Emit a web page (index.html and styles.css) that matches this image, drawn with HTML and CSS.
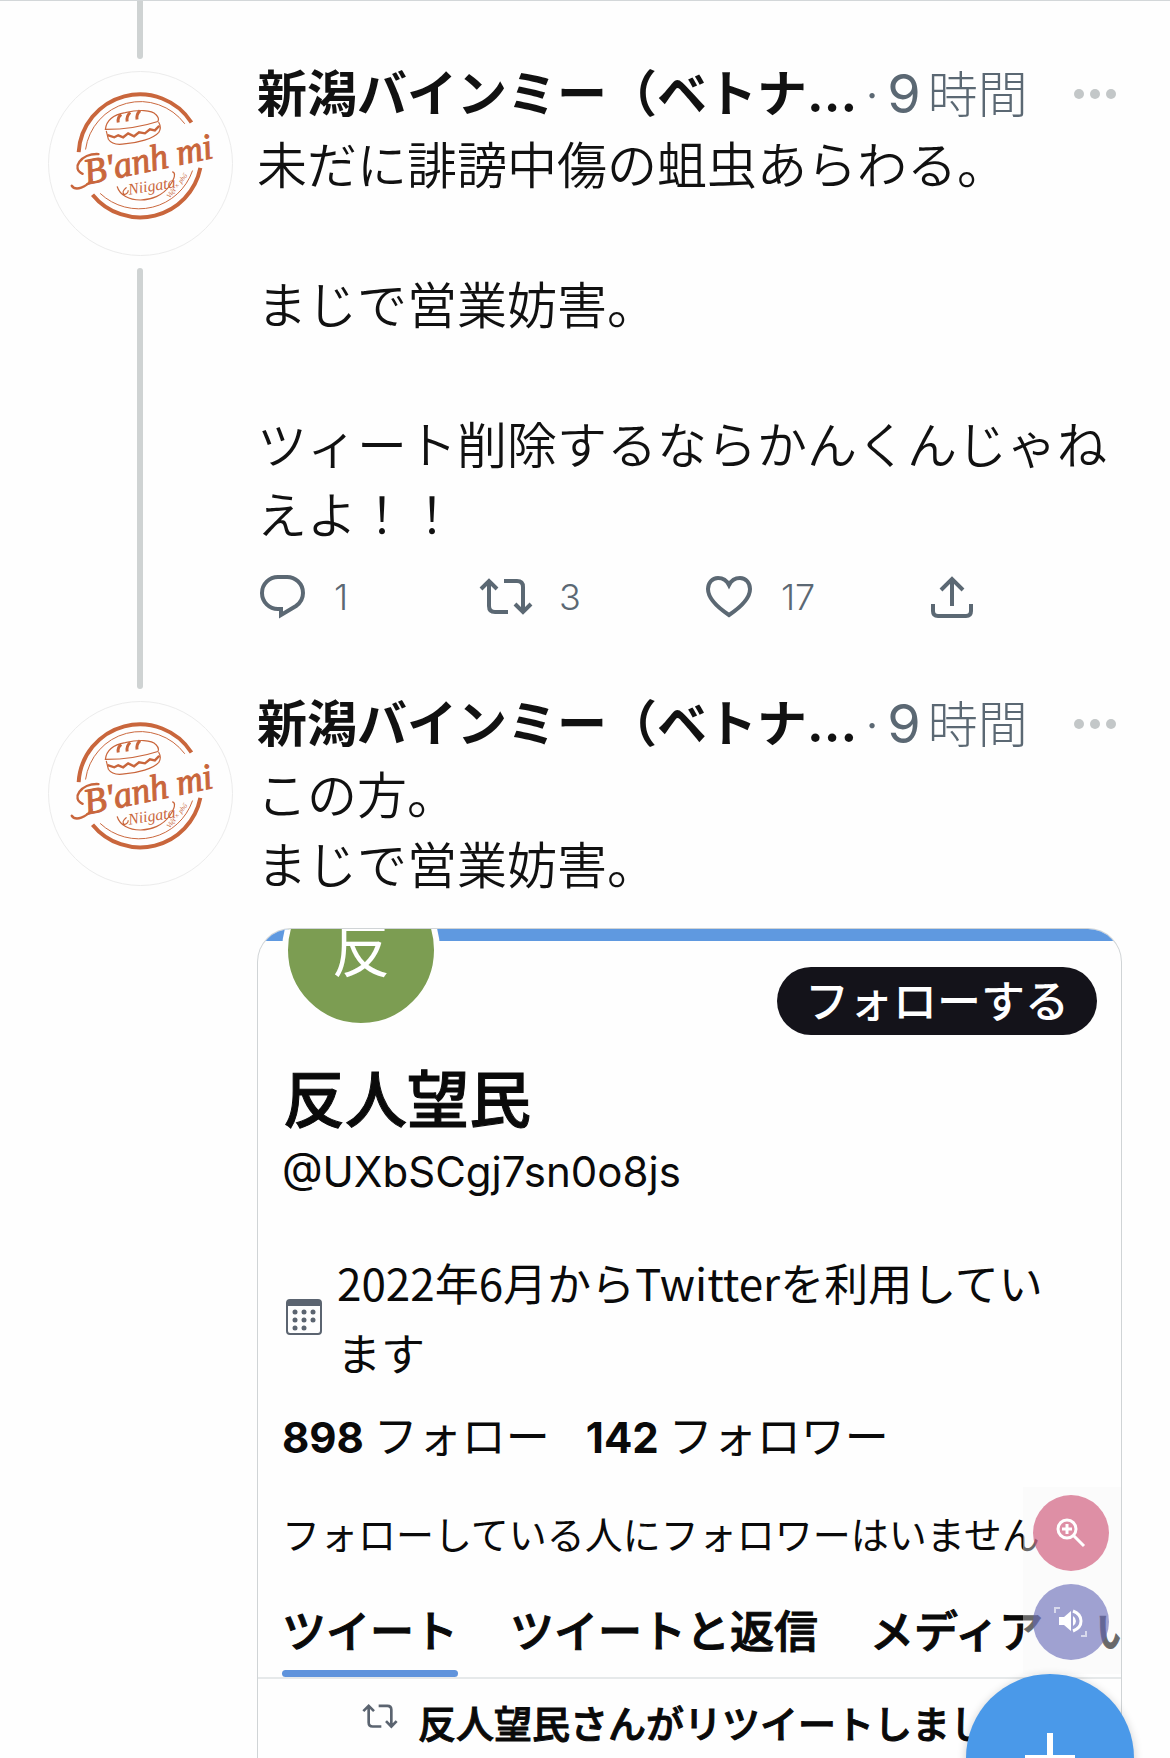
FILE: index.html
```html
<!DOCTYPE html>
<html lang="ja">
<head>
    <meta charset="UTF-8">
    <meta name="viewport" content="width=device-width, initial-scale=1.0">
    <title>新潟バインミー</title>
    <link rel="stylesheet" href="styles.css">
</head>
<body>
    <!-- shared icons -->
    <svg class="sprite" aria-hidden="true">
        <symbol id="logo" viewBox="0 0 185 185">
            <g fill="none" stroke="#c9663c" stroke-linecap="round">
                <path stroke-width="4" stroke-linecap="butt" d="M30 81A62 62 0 0 1 144 51M44 124A62 62 0 0 0 153 97"/>
                <path stroke-width="1" d="M37 78A56 56 0 0 1 137 52M52 123A57 57 0 0 0 145 100"/>
                <path stroke-width="1.2" d="M57 58C58 48 66 43 77 41C90 38 104 38 108 43Q112 47 110 50C95 55 76 58 57 58ZM58 60L60 68Q64 74 74 73C90 72 106 67 111 61Q114 56 111 51"/>
                <path stroke-width="2.4" d="M60 64L66 66L70 64L75 66L80 62L86 65L91 61L97 62L102 58L107 59L111 55"/>
                <path stroke-width="3" stroke-linecap="butt" d="M73 43Q69 46 70 51M82 41Q78 45 79 50M92 39Q88 43 89 48"/>
                <path stroke-width="1.2" d="M69 116C74 133 108 135 122 115Q130 103 125 101M78 117Q73 121 76 124Q80 123 80 120"/>
                <path stroke-width="2.4" d="M23 115C27 121 38 116 43 109M34 103C22 98 32 82 50 83"/>
            </g>
            <g class="logo-text">
                <text class="logo-name" x="38" y="114" transform="rotate(-12 38 114)">B'anh mi</text>
                <text class="logo-city" x="81" y="124" transform="rotate(-9 81 124)">Niigata</text>
                <text class="logo-sub" x="122" y="128" transform="rotate(-52 122 128)">Việt × phố</text>
            </g>
        </symbol>
        <symbol id="retweet" viewBox="0 0 54 40">
            <path fill="none" stroke="currentColor" stroke-width="4" d="M2 12L10 4L18 12M10 5V29Q10 35 16 35H29M25 4H38Q44 4 44 10V34M36 27L44 35L52 27"/>
        </symbol>
        <symbol id="reply" viewBox="-5 0 55 48">
            <path fill="none" stroke="currentColor" stroke-width="4" d="M20 4H28A16 16 0 0 1 45 20Q45 28 38 33L23 42V36H20A16 16 0 0 1 20 4Z"/>
        </symbol>
        <symbol id="heart" viewBox="0 0 50 44">
            <path fill="none" stroke="currentColor" stroke-width="4" d="M24 10C21 4 17 3 13 3C7 3 3 8 3 14C3 25 15 34 24 40C33 34 45 25 45 14C45 8 41 3 35 3C31 3 27 4 24 10Z"/>
        </symbol>
        <symbol id="share" viewBox="0 0 44 46">
            <path fill="none" stroke="currentColor" stroke-width="4" d="M2 30V37Q2 42 7 42H35Q40 42 40 37V30M21 32V5M10 16L21 5L32 16"/>
        </symbol>
        <symbol id="dots" viewBox="0 0 42 12">
            <g fill="currentColor"><circle cx="5" cy="6" r="5"/><circle cx="21" cy="6" r="5"/><circle cx="37" cy="6" r="5"/></g>
        </symbol>
    </svg>

    <main class="feed">
        <div class="stub"></div>

        <article class="tweet">
            <div class="side">
                <svg class="avatar" role="img" aria-label="Bánh mì Niigata"><use href="#logo"/></svg>
                <div class="thread-line"></div>
            </div>
            <div class="content">
                <header class="tweet-head">
                    <span class="name">新潟バインミー（ベトナ...</span>
                    <span class="time">·<span class="num">9</span>時間</span>
                    <button class="more" type="button" aria-label="もっと見る"><svg width="42" height="12"><use href="#dots"/></svg></button>
                </header>
                <p class="text">未だに誹謗中傷の蛆虫あらわる。<br><br>まじで営業妨害。<br><br>ツィート削除するならかんくんじゃねえよ！！</p>
                <div class="actions">
                    <button type="button" aria-label="返信"><svg width="55" height="48"><use href="#reply"/></svg><span>1</span></button>
                    <button type="button" aria-label="リツイート"><svg width="54" height="40"><use href="#retweet"/></svg><span>3</span></button>
                    <button type="button" aria-label="いいね"><svg width="50" height="44"><use href="#heart"/></svg><span>17</span></button>
                    <button type="button" aria-label="共有"><svg width="44" height="46"><use href="#share"/></svg></button>
                </div>
            </div>
        </article>

        <article class="tweet">
            <div class="side">
                <svg class="avatar" role="img" aria-label="Bánh mì Niigata"><use href="#logo"/></svg>
            </div>
            <div class="content">
                <header class="tweet-head">
                    <span class="name">新潟バインミー（ベトナ...</span>
                    <span class="time">·<span class="num">9</span>時間</span>
                    <button class="more" type="button" aria-label="もっと見る"><svg width="42" height="12"><use href="#dots"/></svg></button>
                </header>
                <p class="text">この方。<br>まじで営業妨害。</p>

                <section class="card">
                    <div class="cover"></div>
                    <div class="card-head">
                        <div class="initial">反</div>
                        <button class="follow" type="button">フォローする</button>
                    </div>
                    <h2 class="profile-name">反人望民</h2>
                    <p class="handle">@UXbSCgj7sn0o8js</p>
                    <div class="joined">
                        <svg width="38" height="38" viewBox="0 0 38 38" aria-hidden="true">
                            <rect x="2" y="2" width="34" height="34" rx="3" fill="none" stroke="#5b6470" stroke-width="2"/>
                            <path fill="#5b6470" d="M2 2H36V8H2Z"/>
                            <g fill="#5b6470"><circle cx="10" cy="14" r="2.5"/><circle cx="19" cy="14" r="2.5"/><circle cx="28" cy="14" r="2.5"/><circle cx="10" cy="22" r="2.5"/><circle cx="19" cy="22" r="2.5"/><circle cx="28" cy="22" r="2.5"/><circle cx="10" cy="30" r="2.5"/><circle cx="19" cy="30" r="2.5"/></g>
                        </svg>
                        <p>2022年6月からTwitterを利用しています</p>
                    </div>
                    <p class="stats">
                        <span><b>898</b> フォロー</span>
                        <span><b>142</b> フォロワー</span>
                    </p>
                    <p class="note">フォローしている人にフォロワーはいません</p>
                    <nav class="tabs">
                        <a class="active" href="#">ツイート</a>
                        <a href="#">ツイートと返信</a>
                        <a href="#">メディア</a>
                        <a href="#">いいね</a>
                    </nav>
                    <p class="retweeted">
                        <svg width="36" height="27" aria-hidden="true"><use href="#retweet"/></svg>
                        反人望民さんがリツイートしました
                    </p>
                </section>
            </div>
        </article>
    </main>

    <!-- floating buttons -->
    <div class="tools">
        <button class="zoom" type="button" aria-label="拡大">
            <svg width="32" height="32" viewBox="0 0 32 32" fill="none" stroke="#fff" stroke-width="3"><circle cx="12" cy="12" r="9"/><path d="M12 7V17M7 12H17M18 18L29 29"/></svg>
        </button>
        <button class="speak" type="button" aria-label="読み上げ">
            <svg width="36" height="34" viewBox="0 0 36 34"><path fill="#fff" d="M6 12H11L18 6V26L11 20H6Z"/><path fill="none" stroke="#fff" stroke-width="3" d="M20 6Q28 9 28 16T20 26"/><path fill="#fff" d="M20 11Q23 13 23 16T20 21Z"/><path fill="none" stroke="#fff" stroke-opacity=".6" stroke-width="2" d="M2 8V3H7M28 31H33V26"/></svg>
        </button>
    </div>
    <button class="compose" type="button" aria-label="ツイートする">
        <svg width="50" height="50" viewBox="0 0 50 50"><path fill="none" stroke="#fff" stroke-width="6" d="M25 0V50M0 25H50"/></svg>
    </button>
</body>
</html>
```
FILE: styles.css
```css
* {
    box-sizing: border-box;
}

body {
    margin: 0;
    background-color: #fefefe;
    color: #111;
    font-family: "Noto Sans CJK JP", sans-serif;
}

p, h2 {
    margin: 0;
}

button {
    padding: 0;
    border: none;
    background: none;
    font-family: inherit;
    cursor: pointer;
}

svg {
    display: block;
    flex-shrink: 0;
}

.sprite {
    position: absolute;
    width: 0;
    height: 0;
}

.feed {
    height: 100vh;
    overflow: hidden;
    padding: 0 48px;
    border-top: 1px solid #d3d7d9;
}

/* thread line */
.stub {
    width: 6px;
    height: 58px;
    margin-left: 89px;
    border-radius: 0 0 3px 3px;
    background-color: #cfd3d3;
}

.thread-line {
    flex: 1;
    width: 6px;
    margin: 12px 0 0 89px;
    border-radius: 3px;
    background-color: #cfd3d3;
}

/* tweet */
.tweet {
    display: grid;
    grid-template-columns: 185px minmax(0, 1fr);
    gap: 24px;
}

.side {
    display: flex;
    flex-direction: column;
    padding-top: 12px;
}

.avatar {
    width: 185px;
    height: 185px;
    border: 1px solid #ececec;
    border-radius: 50%;
}

.logo-text {
    fill: #c9663c;
    font-family: "Liberation Serif", serif;
    font-style: italic;
}

.logo-name {
    font-size: 37px;
    stroke: #c9663c;
    stroke-width: 1px;
}

.logo-city {
    font-size: 16px;
}

.logo-sub {
    font-size: 7px;
}

.tweet-head {
    display: flex;
    align-items: center;
    height: 70px;
    font-size: 50px;
    line-height: 70px;
    white-space: nowrap;
}

.name {
    font-family: Inter, "Noto Sans CJK JP", sans-serif;
    font-weight: bold;
}

.time {
    margin-left: 8px;
    color: #5b6873;
    font-family: Inter, "Noto Sans CJK JP", sans-serif;
    font-weight: 300;
}

.num {
    margin: 0 7px 0 8px;
    font-size: 54px;
    font-weight: 400;
}

.more {
    margin-left: auto;
    margin-right: 6px;
    color: #c3c7c8;
}

.text {
    margin-top: -2px;
    margin-right: -6px;
    font-size: 50px;
    font-weight: 350;
    line-height: 70px;
}

.actions {
    display: grid;
    grid-template-columns: repeat(4, 26%);
    height: 52px;
    margin: 24px 0 66px -4px;
}

.actions button {
    display: flex;
    align-items: center;
    color: #5b6873;
    font-family: Inter, sans-serif;
    font-size: 36px;
    font-weight: 300;
}

.actions svg + span {
    margin-left: 26px;
}

/* profile card */
.card {
    overflow: hidden;
    margin-top: 31px;
    padding-bottom: 30px;
    border: 1px solid #d0d4d6;
    border-bottom: none;
    border-radius: 34px 34px 0 0;
    color: #0a0a0a;
}

.cover {
    height: 12px;
    background-color: #5f99e0;
}

.card-head {
    display: flex;
    justify-content: space-between;
    align-items: flex-start;
    padding: 0 24px;
}

.initial {
    width: 158px;
    height: 158px;
    margin-top: -70px;
    border: 6px solid #fefefe;
    border-radius: 50%;
    background-color: #7c9d52;
    color: #fff;
    font-size: 58px;
    font-weight: 400;
    line-height: 140px;
    text-align: center;
}

.follow {
    height: 68px;
    margin-top: 26px;
    padding: 4px 28px 8px;
    border-radius: 34px;
    background-color: #14131a;
    color: #fff;
    font-size: 44px;
    font-weight: 500;
    line-height: 56px;
}

.profile-name {
    margin-top: 21px;
    padding: 0 25px;
    font-size: 62px;
    font-weight: 500;
    line-height: 80px;
    -webkit-text-stroke: 1px #0a0a0a;
}

.handle {
    margin-top: 10px;
    padding: 0 24px;
    font-family: Inter, sans-serif;
    font-size: 42px;
    line-height: 52px;
}

.joined {
    display: flex;
    align-items: center;
    gap: 14px;
    margin-top: 49px;
    padding: 0 64px 0 27px;
    font-size: 44px;
    line-height: 70px;
}

.stats {
    display: flex;
    gap: 36px;
    margin-top: 17px;
    padding: 0 24px;
    font-size: 44px;
    line-height: 60px;
}

.stats b {
    font-family: Inter, sans-serif;
    font-size: 42px;
}

.note {
    margin-top: 40px;
    padding: 0 24px;
    font-size: 38px;
    line-height: 50px;
    white-space: nowrap;
}

.tabs {
    display: flex;
    gap: 52px;
    margin-top: 41px;
    padding: 0 24px;
    border-bottom: 2px solid #e6e9ea;
    font-size: 44px;
    font-weight: 500;
    line-height: 60px;
    white-space: nowrap;
    -webkit-text-stroke: 1px #0a0a0a;
}

.tabs a {
    padding-bottom: 18px;
    color: inherit;
    text-decoration: none;
}

.tabs .active {
    padding-bottom: 0;
}

.tabs .active::after {
    content: "";
    display: block;
    height: 7px;
    margin-top: 11px;
    border-radius: 4px;
    background-color: #5f93dc;
}

.retweeted {
    display: flex;
    gap: 20px;
    margin-top: 18px;
    padding-left: 104px;
    font-size: 38px;
    font-weight: 500;
    line-height: 50px;
    white-space: nowrap;
    -webkit-text-stroke: 1px #0a0a0a;
}

.retweeted svg {
    margin-top: 6px;
    color: #5b6470;
}

/* floating buttons */
.tools {
    position: fixed;
    right: 49px;
    bottom: 84px;
    display: flex;
    flex-direction: column;
    gap: 13px;
    padding: 8px 12px 14px 10px;
    background-color: rgba(247, 247, 248, 0.4);
}

.tools button {
    display: flex;
    align-items: center;
    justify-content: center;
    width: 76px;
    height: 76px;
    border-radius: 50%;
}

.zoom {
    background-color: rgba(204, 72, 108, 0.6);
}

.speak {
    background-color: rgba(99, 102, 182, 0.6);
}

.compose {
    position: fixed;
    right: 36px;
    bottom: -84px;
    display: flex;
    align-items: center;
    justify-content: center;
    width: 168px;
    height: 168px;
    border-radius: 50%;
    background-color: #4a99e9;
    box-shadow: 0 2px 10px rgba(0, 0, 0, 0.2);
}
```
